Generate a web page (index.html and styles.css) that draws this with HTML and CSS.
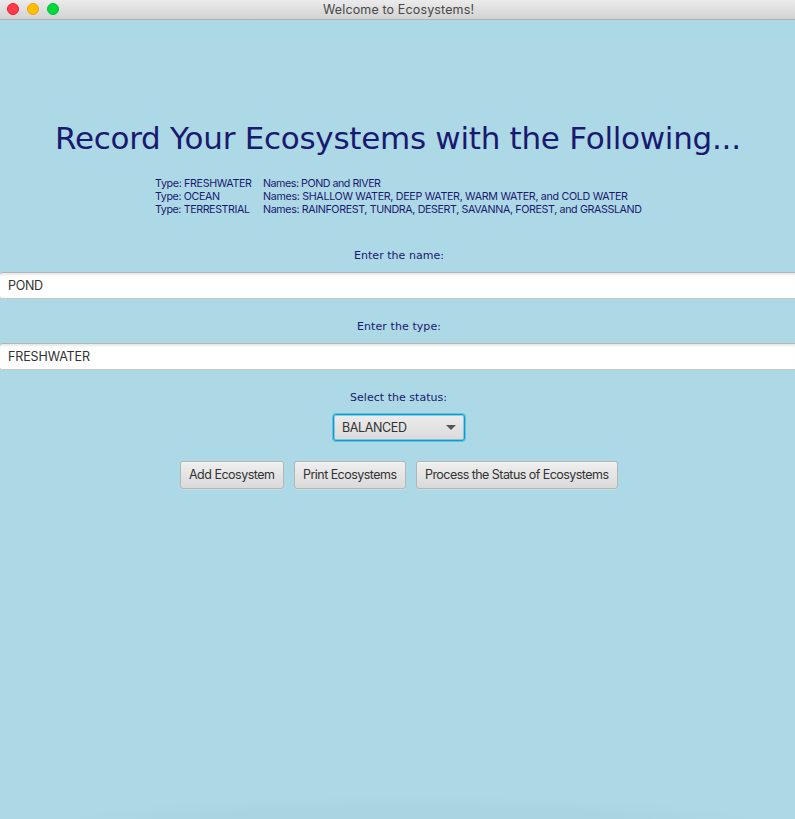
FILE: index.html
```html
<!DOCTYPE html>
<html lang="en">
<head>
<meta charset="utf-8">
<title>Welcome to Ecosystems!</title>
<link rel="stylesheet" href="styles.css">
</head>
<body>
<header class="titlebar">
  <div class="lights"><span class="light red"></span><span class="light yellow"></span><span class="light green"></span></div>
  <svg class="title" width="153" height="18"><text x="0" y="13" textLength="151">Welcome to Ecosystems!</text></svg>
</header>
<main class="content">
  <svg class="heading" width="688" height="44"><text x="0" y="33" textLength="686">Record Your Ecosystems with the Following...</text></svg>
  <div class="types">
    <svg width="98" height="13"><text x="0" y="10" textLength="97">Type: FRESHWATER</text></svg>
    <svg width="380" height="13"><text x="0" y="10" textLength="118">Names: POND and RIVER</text></svg>
    <svg width="98" height="13"><text x="0" y="10" textLength="65">Type: OCEAN</text></svg>
    <svg width="380" height="13"><text x="0" y="10" textLength="365">Names: SHALLOW WATER, DEEP WATER, WARM WATER, and COLD WATER</text></svg>
    <svg width="98" height="13"><text x="0" y="10" textLength="95">Type: TERRESTRIAL</text></svg>
    <svg width="380" height="13"><text x="0" y="10" textLength="379">Names: RAINFOREST, TUNDRA, DESERT, SAVANNA, FOREST, and GRASSLAND</text></svg>
  </div>
  <svg class="label" width="91" height="16"><text x="0" y="12" textLength="90">Enter the name:</text></svg>
  <div class="field"><svg width="36" height="18"><text x="0" y="13" textLength="35">POND</text></svg></div>
  <svg class="label" width="85" height="16"><text x="0" y="12" textLength="84">Enter the type:</text></svg>
  <div class="field"><svg width="83" height="18"><text x="0" y="13" textLength="82">FRESHWATER</text></svg></div>
  <svg class="label" width="98" height="16"><text x="0" y="12" textLength="97">Select the status:</text></svg>
  <div class="combo"><svg width="66" height="18"><text x="0" y="13" textLength="65">BALANCED</text></svg><span class="arrow"></span></div>
  <div class="buttons">
    <button class="btn"><svg width="86" height="18"><text x="0" y="13" textLength="86">Add Ecosystem</text></svg></button>
    <button class="btn"><svg width="94" height="18"><text x="0" y="13" textLength="94">Print Ecosystems</text></svg></button>
    <button class="btn"><svg width="184" height="18"><text x="0" y="13" textLength="184">Process the Status of Ecosystems</text></svg></button>
  </div>
</main>
</body>
</html>
```
FILE: styles.css
```css
* { box-sizing: border-box; }
body { margin: 0; height: 819px; overflow: hidden; background: radial-gradient(ellipse 340px 22px at 52% 100%, #a9d4e1 60%, #add8e6) #add8e6; font-family: Inter, sans-serif; color: #323232; }
svg { display: block; overflow: visible; flex: none; fill: currentColor; }
.titlebar { height: 20px; display: flex; align-items: flex-start; background: linear-gradient(#ebebeb, #d3d3d3); border-bottom: 1px solid #b0b0b0; }
.lights { display: flex; gap: 8px; padding: 3px 0 0 7px; width: 323px; }
.light { width: 12px; height: 12px; border-radius: 50%; border: 1px solid; }
.red { background: #ff3b47; border-color: #ee1c30; }
.yellow { background: #ffbf00; border-color: #eda211; }
.green { background: #00d83c; border-color: #00bd38; }
.title { font-size: 12.5px; color: #484848; margin-top: 1px; }
.content { display: flex; flex-direction: column; align-items: center; }
.heading { margin: 96px 0 0 3px; font: 31px Verdana, "DejaVu Sans", sans-serif; color: #191970; }
.types { display: grid; grid-template-columns: 98px 380px; column-gap: 10px; margin: 17px 0 0 2px; font-size: 10.7px; color: #191970; }
.label { font: 11px Verdana, "DejaVu Sans", sans-serif; color: #191970; margin: 31px 0 9px 3px; }
.field { width: 100%; height: 27px; padding: 4px 8px; background: #fff; border: 1px solid #b5b5b5; border-width: 1px 0; border-bottom-color: #c8c8c8; border-radius: 3px 0 0 3px; font-size: 12.5px; box-shadow: inset 0 3px 2px -1px #e8e8e8; }
.field + .label { margin-top: 19px; margin-bottom: 9px; }
.combo { width: 132px; height: 27px; margin: 0 0 1px 3px; padding: 3px 8px; border: 1px solid #039ed3; border-radius: 3px; background: linear-gradient(#ececec, #dadada); box-shadow: 0 0 0 1px #039ed366, inset 0 0 0 1px #039ed366; display: flex; justify-content: space-between; align-items: center; font-size: 12.5px; }
.arrow { border: solid transparent; border-width: 5px 5px 0; border-top-color: #555; }
.buttons { display: flex; gap: 10px; margin: 19px 0 0 3px; }
.btn { height: 28px; padding: 0 8px; border: 1px solid #b5b5b5; border-radius: 3px; background: linear-gradient(#efefef, #dadada); box-shadow: inset 0 1px #f5f5f5, 0 1px #c4dfe8; color: #323232; font: 12.5px Inter, sans-serif; }
```
